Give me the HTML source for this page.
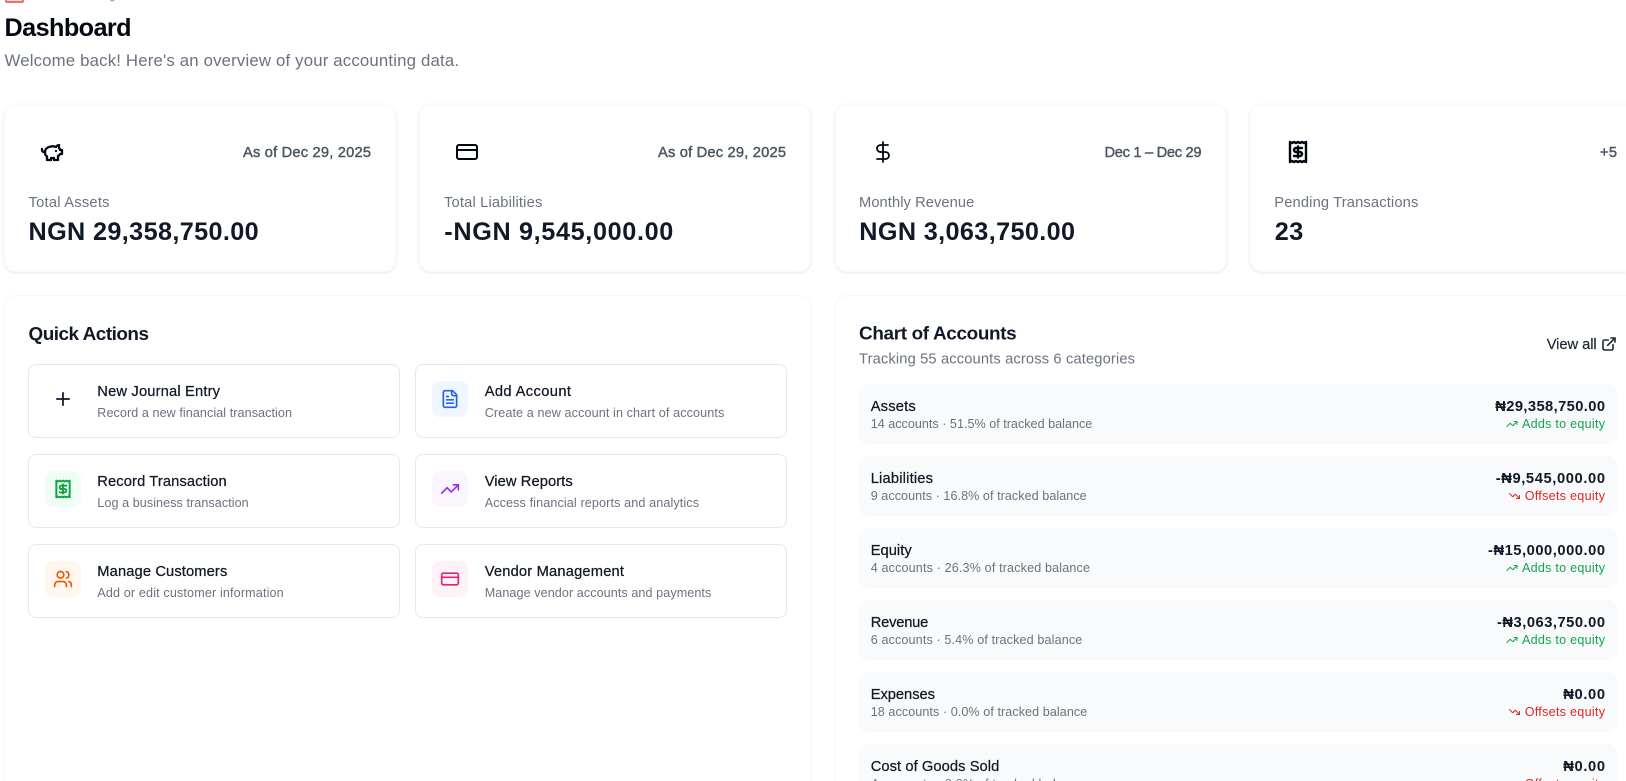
<!DOCTYPE html>
<html lang="en">
<head>
<meta charset="utf-8">
<title>Dashboard</title>
<style>
html,body{margin:0;padding:0;background:#fff;width:1626px;height:781px;overflow:hidden}
body{position:relative}
.card,.panel,.act,.row,.ib{position:absolute;box-sizing:border-box}
.card{top:104px;width:391.5px;height:168px;background:#fff;border:1px solid #fafafb;border-radius:12px;box-shadow:0 1px 3px rgba(0,0,0,.1)}
.panel{top:295px;width:807px;height:486px;background:#fff;border:1px solid #f7f7f8;border-bottom:0;border-radius:12px 12px 0 0;box-shadow:0 1px 2px rgba(0,0,0,.02)}
.act{width:371.5px;height:74px;background:#fff;border:1px solid #e5e7eb;border-radius:8px}
.row{left:859px;width:758px;height:60px;background:#f9fafb;border-radius:9px}
.ib{width:36px;height:36px;border-radius:8px}
svg.o{position:absolute;left:0;top:0}
text{font-family:"Liberation Sans",sans-serif;white-space:pre}
.h1{font-size:25.2px;font-weight:700;fill:#030712}
.wel{font-size:16.8px;fill:#6b7280}
.dt{font-size:14.7px;fill:#4b5563;stroke:#4b5563;stroke-width:.4px}
.lb{font-size:14.7px;fill:#6b7280}
.val{font-size:25.2px;font-weight:700;fill:#111827}
.h2{font-size:18.9px;font-weight:700;fill:#111827}
.at{font-size:14.7px;fill:#111827;stroke:#111827;stroke-width:.25px}
.as{font-size:12.6px;fill:#6b7280}
.rs{font-size:12.6px;fill:#6b7280}
.ra{font-size:14.7px;font-weight:700;fill:#111827}
.g{font-size:12.6px;fill:#16a34a}
.r{font-size:12.6px;fill:#dc2626}
.va{font-size:14.7px;fill:#1f2937;stroke:#1f2937;stroke-width:.2px}
.ic{fill:none;stroke-linecap:round;stroke-linejoin:round;stroke-width:2}
</style>
</head>
<body>
<div class="card" style="left:4px"></div>
<div class="card" style="left:419px"></div>
<div class="card" style="left:835px"></div>
<div class="card" style="left:1250px;width:376px;border-right:0;border-radius:12px 0 0 12px"></div>
<div class="panel" style="left:4px"></div>
<div class="panel" style="left:835px;width:791px;border-right:0;border-radius:12px 0 0 0"></div>

<div class="act" style="left:28px;top:364px"></div>
<div class="act" style="left:415px;top:364px"></div>
<div class="act" style="left:28px;top:454px"></div>
<div class="act" style="left:415px;top:454px"></div>
<div class="act" style="left:28px;top:544px"></div>
<div class="act" style="left:415px;top:544px"></div>

<div class="ib" style="left:432px;top:381px;background:#eff6ff"></div>
<div class="ib" style="left:45px;top:471px;background:#f0fdf4"></div>
<div class="ib" style="left:432px;top:471px;background:#faf5ff"></div>
<div class="ib" style="left:45px;top:561px;background:#fff7ed"></div>
<div class="ib" style="left:432px;top:561px;background:#fdf2f8"></div>

<div class="row" style="top:384px"></div>
<div class="row" style="top:456px"></div>
<div class="row" style="top:528px"></div>
<div class="row" style="top:600px"></div>
<div class="row" style="top:672px"></div>
<div class="row" style="top:744px;height:37px;border-radius:9px 9px 0 0"></div>

<svg class="o" width="1626" height="781" viewBox="0 0 1626 781" xmlns="http://www.w3.org/2000/svg">
  <!-- clipped breadcrumb icon -->
  <path d="M6 -4V1a1 1 0 0 0 1 1h15a1 1 0 0 0 1-1V-4" fill="#fee2e2" stroke="#ef4444" stroke-width="1.5"/>
  <path d="M110.5 .2q1.800 1.300 3.800 0" fill="none" stroke="#8b93a0" stroke-width="1"/>

  <text class="h1" x="4.500" y="36" textLength="127" lengthAdjust="spacing">Dashboard</text>
  <text class="wel" x="4.500" y="66" textLength="454.500" lengthAdjust="spacing">Welcome back! Here's an overview of your accounting data.</text>

  <!-- stat cards -->
  <svg class="ic" x="40" y="140" width="24" height="24" viewBox="0 0 24 24" stroke="#030712" style="stroke-width:2.3"><path d="M19 5c-1.500 0-2.800 1.400-3 2-3.500-1.500-11-.3-11 5 0 1.800 0 3 2 4.500V20h4v-2h3v2h4v-4c1-.5 1.700-1 2-2h2v-4h-2c0-1-.5-1.500-1-2V5z"/><path d="M2 9v1c0 1.100.9 2 2 2h1"/><path d="M16 11h.01"/></svg>
  <svg class="ic" x="455" y="140" width="24" height="24" viewBox="0 0 24 24" stroke="#030712"><rect x="2" y="5" width="20" height="14" rx="2"/><path d="M2 10h20"/></svg>
  <svg class="ic" x="871" y="140" width="24" height="24" viewBox="0 0 24 24" stroke="#030712" style="stroke-width:1.8"><path d="M12 2v20"/><path d="M17 5H9.500a3.500 3.500 0 0 0 0 7h5a3.500 3.500 0 0 1 0 7H6"/></svg>
  <svg class="ic" x="1286" y="140" width="24" height="24" viewBox="0 0 24 24" stroke="#030712" style="stroke-width:2.4"><path d="M4 2v20l2-1 2 1 2-1 2 1 2-1 2 1 2-1 2 1V2l-2 1-2-1-2 1-2-1-2 1-2-1-2 1Z"/><path d="M16 8h-6a2 2 0 1 0 0 4h4a2 2 0 1 1 0 4H8"/><path d="M12 17.500v-11"/></svg>

  <text class="dt" x="243" y="157" textLength="128" lengthAdjust="spacing">As of Dec 29, 2025</text>
  <text class="dt" x="658" y="157" textLength="128" lengthAdjust="spacing">As of Dec 29, 2025</text>
  <text class="dt" x="1104.500" y="157" textLength="97" lengthAdjust="spacing">Dec 1 – Dec 29</text>
  <text class="dt" x="1600" y="157" textLength="17" lengthAdjust="spacing">+5</text>

  <text class="lb" x="28.500" y="207" textLength="81" lengthAdjust="spacing">Total Assets</text>
  <text class="lb" x="444" y="207" textLength="98.300" lengthAdjust="spacing">Total Liabilities</text>
  <text class="lb" x="859" y="207" textLength="115.300" lengthAdjust="spacing">Monthly Revenue</text>
  <text class="lb" x="1274.300" y="207" textLength="144" lengthAdjust="spacing">Pending Transactions</text>

  <text class="val" x="28.500" y="240" textLength="230.200" lengthAdjust="spacing">NGN 29,358,750.00</text>
  <text class="val" x="444.300" y="240" textLength="229" lengthAdjust="spacing">-NGN 9,545,000.00</text>
  <text class="val" x="859.300" y="240" textLength="215.700" lengthAdjust="spacing">NGN 3,063,750.00</text>
  <text class="val" x="1274.700" y="240" textLength="28.600" lengthAdjust="spacing">23</text>

  <!-- quick actions -->
  <text class="h2" x="28.500" y="340" textLength="120.500" lengthAdjust="spacing">Quick Actions</text>

  <svg class="ic" x="52.500" y="388.500" width="21" height="21" viewBox="0 0 24 24" stroke="#111827"><path d="M5 12h14"/><path d="M12 5v14"/></svg>
  <svg class="ic" x="440" y="389" width="20" height="20" viewBox="0 0 24 24" stroke="#2563eb"><path d="M15 2H6a2 2 0 0 0-2 2v16a2 2 0 0 0 2 2h12a2 2 0 0 0 2-2V7Z"/><path d="M14 2v4a2 2 0 0 0 2 2h4"/><path d="M10 9H8"/><path d="M16 13H8"/><path d="M16 17H8"/></svg>
  <svg class="ic" x="53" y="479" width="20" height="20" viewBox="0 0 24 24" stroke="#16a34a" style="stroke-width:2.4"><path d="M4 2v20l2-1 2 1 2-1 2 1 2-1 2 1 2-1 2 1V2l-2 1-2-1-2 1-2-1-2 1-2-1-2 1Z"/><path d="M16 8h-6a2 2 0 1 0 0 4h4a2 2 0 1 1 0 4H8"/><path d="M12 17.500v-11"/></svg>
  <svg class="ic" x="440" y="479" width="20" height="20" viewBox="0 0 24 24" stroke="#9333ea"><path d="M22 7 13.500 15.500 8.500 10.500 2 17"/><path d="M16 7h6v6"/></svg>
  <svg class="ic" x="53" y="569" width="20" height="20" viewBox="0 0 24 24" stroke="#ea580c"><path d="M16 21v-2a4 4 0 0 0-4-4H6a4 4 0 0 0-4 4v2"/><circle cx="9" cy="7" r="4"/><path d="M22 21v-2a4 4 0 0 0-3-3.870"/><path d="M16 3.130a4 4 0 0 1 0 7.750"/></svg>
  <svg class="ic" x="440" y="569" width="20" height="20" viewBox="0 0 24 24" stroke="#db2777"><rect x="2" y="5" width="20" height="14" rx="2"/><path d="M2 10h20"/></svg>

  <text class="at" x="97.300" y="396" textLength="122.700" lengthAdjust="spacing">New Journal Entry</text>
  <text class="as" x="97.300" y="417" textLength="194.700" lengthAdjust="spacing">Record a new financial transaction</text>
  <text class="at" x="484.700" y="396" textLength="86.300" lengthAdjust="spacing">Add Account</text>
  <text class="as" x="484.700" y="417" textLength="239.600" lengthAdjust="spacing">Create a new account in chart of accounts</text>
  <text class="at" x="97.300" y="486" textLength="129.400" lengthAdjust="spacing">Record Transaction</text>
  <text class="as" x="97.300" y="507" textLength="151.400" lengthAdjust="spacing">Log a business transaction</text>
  <text class="at" x="484.700" y="486" textLength="88" lengthAdjust="spacing">View Reports</text>
  <text class="as" x="484.700" y="507" textLength="214.300" lengthAdjust="spacing">Access financial reports and analytics</text>
  <text class="at" x="97.300" y="576" textLength="130" lengthAdjust="spacing">Manage Customers</text>
  <text class="as" x="97.300" y="597" textLength="186.400" lengthAdjust="spacing">Add or edit customer information</text>
  <text class="at" x="484.700" y="576" textLength="139.300" lengthAdjust="spacing">Vendor Management</text>
  <text class="as" x="484.700" y="597" textLength="226.600" lengthAdjust="spacing">Manage vendor accounts and payments</text>

  <!-- chart of accounts -->
  <text class="h2" x="859" y="339.500" textLength="157.700" lengthAdjust="spacing">Chart of Accounts</text>
  <text class="lb" x="859" y="363.300" textLength="276" lengthAdjust="spacing">Tracking 55 accounts across 6 categories</text>
  <text class="va" x="1546.700" y="349" textLength="50" lengthAdjust="spacing">View all</text>
  <svg class="ic" x="1601" y="336" width="16" height="16" viewBox="0 0 24 24" stroke="#1f2937" style="stroke-width:2.4"><path d="M15 3h6v6"/><path d="M10 14 21 3"/><path d="M18 13v6a2 2 0 0 1-2 2H5a2 2 0 0 1-2-2V8a2 2 0 0 1 2-2h6"/></svg>

  <text class="at" x="870.700" y="411" textLength="45" lengthAdjust="spacing">Assets</text>
  <text class="rs" x="870.700" y="428" textLength="221.600" lengthAdjust="spacing">14 accounts · 51.5% of tracked balance</text>
  <text class="ra" x="1495.300" y="411" textLength="109.700" lengthAdjust="spacing">₦29,358,750.00</text>
  <svg class="ic" x="1506" y="418" width="12" height="12" viewBox="0 0 24 24" stroke="#16a34a"><path d="M22 7 13.500 15.500 8.500 10.500 2 17"/><path d="M16 7h6v6"/></svg>
  <text class="g" x="1522" y="428" textLength="83" lengthAdjust="spacing">Adds to equity</text>

  <text class="at" x="870.700" y="483" textLength="62.300" lengthAdjust="spacing">Liabilities</text>
  <text class="rs" x="870.700" y="500" textLength="216" lengthAdjust="spacing">9 accounts · 16.8% of tracked balance</text>
  <text class="ra" x="1495.700" y="483" textLength="109.300" lengthAdjust="spacing">-₦9,545,000.00</text>
  <svg class="ic" x="1508.500" y="490" width="12" height="12" viewBox="0 0 24 24" stroke="#dc2626"><path d="M22 17 13.500 8.500 8.500 13.500 2 7"/><path d="M16 17h6v-6"/></svg>
  <text class="r" x="1524.700" y="500" textLength="80.300" lengthAdjust="spacing">Offsets equity</text>

  <text class="at" x="870.700" y="555" textLength="41" lengthAdjust="spacing">Equity</text>
  <text class="rs" x="870.700" y="572" textLength="219.300" lengthAdjust="spacing">4 accounts · 26.3% of tracked balance</text>
  <text class="ra" x="1488" y="555" textLength="117" lengthAdjust="spacing">-₦15,000,000.00</text>
  <svg class="ic" x="1506" y="562" width="12" height="12" viewBox="0 0 24 24" stroke="#16a34a"><path d="M22 7 13.500 15.500 8.500 10.500 2 17"/><path d="M16 7h6v6"/></svg>
  <text class="g" x="1522" y="572" textLength="83" lengthAdjust="spacing">Adds to equity</text>

  <text class="at" x="870.700" y="627" textLength="57.600" lengthAdjust="spacing">Revenue</text>
  <text class="rs" x="870.700" y="644" textLength="211.600" lengthAdjust="spacing">6 accounts · 5.4% of tracked balance</text>
  <text class="ra" x="1497" y="627" textLength="108" lengthAdjust="spacing">-₦3,063,750.00</text>
  <svg class="ic" x="1506" y="634" width="12" height="12" viewBox="0 0 24 24" stroke="#16a34a"><path d="M22 7 13.500 15.500 8.500 10.500 2 17"/><path d="M16 7h6v6"/></svg>
  <text class="g" x="1522" y="644" textLength="83" lengthAdjust="spacing">Adds to equity</text>

  <text class="at" x="870.700" y="699" textLength="64.300" lengthAdjust="spacing">Expenses</text>
  <text class="rs" x="870.700" y="716" textLength="216.600" lengthAdjust="spacing">18 accounts · 0.0% of tracked balance</text>
  <text class="ra" x="1563.300" y="699" textLength="41.700" lengthAdjust="spacing">₦0.00</text>
  <svg class="ic" x="1508.500" y="706" width="12" height="12" viewBox="0 0 24 24" stroke="#dc2626"><path d="M22 17 13.500 8.500 8.500 13.500 2 7"/><path d="M16 17h6v-6"/></svg>
  <text class="r" x="1524.700" y="716" textLength="80.300" lengthAdjust="spacing">Offsets equity</text>

  <text class="at" x="870.700" y="771" textLength="128.600" lengthAdjust="spacing">Cost of Goods Sold</text>
  <text class="rs" x="870.700" y="788" textLength="213" lengthAdjust="spacing">4 accounts · 0.0% of tracked balance</text>
  <text class="ra" x="1563.300" y="771" textLength="41.700" lengthAdjust="spacing">₦0.00</text>
  <svg class="ic" x="1508.500" y="778" width="12" height="3" viewBox="0 0 24 6" stroke="#dc2626"><path d="M22 17 13.500 8.500 8.500 13.500 2 7"/><path d="M16 17h6v-6"/></svg>
  <text class="r" x="1524.700" y="788" textLength="80.300" lengthAdjust="spacing">Offsets equity</text>
</svg>
</body>
</html>
